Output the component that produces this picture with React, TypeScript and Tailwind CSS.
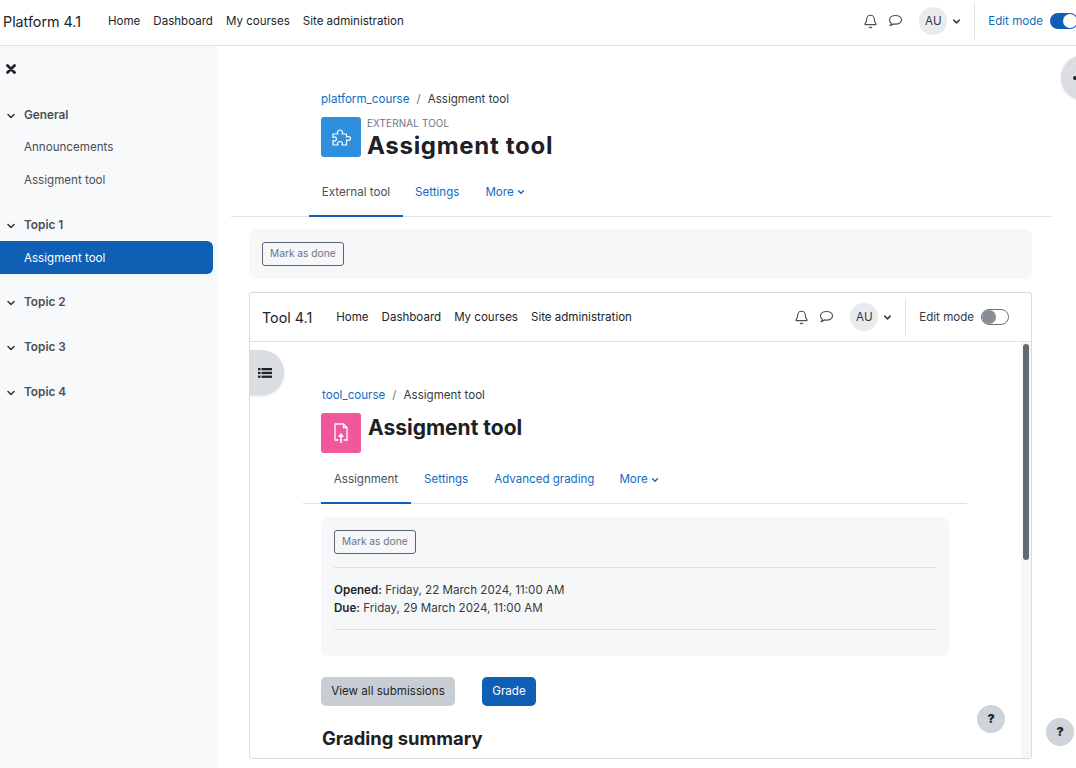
import { Bell, ChevronDown } from "lucide-react";

const font = "font-['Inter','Liberation_Sans',sans-serif]";

function Chevron({ className }: { className?: string }) {
  return <ChevronDown className={className} strokeWidth={3.2} />;
}

function ChatIcon() {
  return (
    <svg className="ml-[10px]" width="15" height="14" viewBox="0 0 15 14" fill="none" stroke="#495057" strokeWidth="1.2" strokeLinejoin="round">
      <path d="M7.500 1.500c3.400 0 6 1.800 6 4.300s-2.600 4.300-6 4.300c-.8 0-1.500-.1-2.200-.3-.7.8-1.800 1.600-3.200 1.800.7-.7 1.100-1.500 1.200-2.500C2.300 8.800 1.500 7.400 1.500 5.800c0-2.500 2.600-4.300 6-4.300z" />
    </svg>
  );
}

function TopBar({ brand, edit, barClass, navClass }: { brand: string; edit: boolean; barClass: string; navClass: string }) {
  return (
    <div className={`flex items-center ${barClass}`}>
      <span className="pt-[2px] text-[14.3px] text-[#212529] whitespace-nowrap">{brand}</span>
      <nav className={`flex gap-[13px] pt-[2px] text-[11.55px] text-[#212529] whitespace-nowrap ${navClass}`}>
        <span>Home</span>
        <span>Dashboard</span>
        <span>My courses</span>
        <span>Site administration</span>
      </nav>
      <div className="ml-auto flex items-center shrink-0">
        <Bell className="w-[15px] h-[15px] text-[#495057]" strokeWidth={1.8} />
        <ChatIcon />
        <div className="ml-[16px] w-[28px] h-[28px] pt-[2px] rounded-full bg-[#e9ecef] flex items-center justify-center text-[11.6px] text-[#343a40]">
          AU
        </div>
        <Chevron className="w-[11px] h-[11px] ml-[4px] text-[#343a40]" />
        <div className="w-px h-[36px] bg-[#dee2e6] ml-[12px]" />
        <span className={`ml-[13px] pt-[2px] text-[11.55px] whitespace-nowrap ${edit ? "text-[#0f6cbf]" : "text-[#343a40]"}`}>
          Edit mode
        </span>
        {edit ? (
          <div className="ml-[7px] w-[28px] h-[16px] rounded-full bg-[#0f5fb5] shrink-0 flex items-center justify-end pr-[1px]">
            <div className="w-[14px] h-[14px] rounded-full bg-white" />
          </div>
        ) : (
          <div className="ml-[7px] w-[28px] h-[16px] rounded-full border border-[#6a737b] bg-white shrink-0 flex items-center">
            <div className="w-[14px] h-[14px] rounded-full bg-[#868e96]" />
          </div>
        )}
      </div>
    </div>
  );
}

function SideSection({ title }: { title: string }) {
  return (
    <div className="flex items-center h-[20px] pl-[5px] text-[#343a40]">
      <Chevron className="w-[12px] h-[12px]" />
      <span className="ml-[7px] text-[11.8px] font-semibold text-[#495057]">{title}</span>
    </div>
  );
}

function SideItem({ label, active }: { label: string; active?: boolean }) {
  return (
    <div
      className={`h-[33px] mr-[5px] pl-[24px] pt-[2px] flex items-center text-[11.6px] rounded-r-[6px] ${
        active ? "bg-[#0f5fb5] text-white" : "text-[#495057]"
      }`}
    >
      {label}
    </div>
  );
}

function Tab({ label, active, className, boxClass }: { label: React.ReactNode; active?: boolean; className?: string; boxClass?: string }) {
  return (
    <div
      className={`flex items-center justify-center border-b-2 -mb-px ${boxClass ?? ""} ${
        active ? "border-[#0f5fb5] text-[#495057]" : "border-transparent text-[#0f6cbf]"
      } ${className ?? ""}`}
    >
      {label}
    </div>
  );
}

function More() {
  return (
    <span className="flex items-center">
      More
      <Chevron className="w-[10px] h-[10px] ml-[2px]" />
    </span>
  );
}

function HelpButton({ className }: { className: string }) {
  return (
    <div
      className={`absolute w-[28px] h-[28px] rounded-full bg-[#ced4da] flex items-center justify-center text-[12px] font-black text-[#212529] ${className}`}
    >
      ?
    </div>
  );
}

function InnerPage() {
  return (
    <div className="relative h-[467px] border border-[#d8dbde] rounded-[3px] bg-white overflow-hidden">
      <div className="h-[49px] border-b border-[#dee2e6]">
        <TopBar brand="Tool 4.1" edit={false} barClass="h-full pl-[12px] pr-[22px]" navClass="ml-[24px]" />
      </div>

      <div className="flex">
        <div className="flex-1 min-w-0 pl-[53px] pr-[54px]">
          <div className="ml-[19px] mt-[45px] text-[11.6px] leading-[16px] text-[#343a40]">
            <span className="text-[#0f6cbf]">tool_course</span>
            <span className="mx-[7px] text-[#6c757d]">/</span>
            <span>Assigment tool</span>
          </div>
          <div className="ml-[18px] mt-[10px] flex items-start">
            <div className="w-[40px] h-[40px] rounded-[3px] bg-[#f0589b] flex items-center justify-center">
              <svg width="16" height="22" viewBox="0 0 16 22" fill="none" stroke="white" strokeWidth="1.300">
                <path d="M5.500 18H2V2h8.500L14 5.500V18h-3.500" />
                <path d="M10.500 2v3.500H14" />
                <path d="M8 21v-8" strokeWidth="1.600" />
                <path d="M5 15 8 11l3 4z" fill="white" stroke="none" />
              </svg>
            </div>
            <h2 className="ml-[7px] mt-[1px] text-[21px] leading-[28px] font-bold text-[#1d2125]">Assigment tool</h2>
          </div>
          <div className="mt-[9px] h-[42px] border-b border-[#dee2e6] flex items-stretch text-[11.55px]">
            <Tab label="Assignment" active boxClass="pb-[4px]" className="ml-[18px] w-[90px]" />
            <Tab label="Settings" boxClass="pb-[4px]" className="ml-[13px]" />
            <Tab label="Advanced grading" boxClass="pb-[4px]" className="ml-[26px]" />
            <Tab label={<More />} boxClass="pb-[4px]" className="ml-[25px]" />
          </div>
          <div className="mx-[18px] mt-[13px] h-[139px] rounded-lg bg-[#f6f7f9] px-[13px] pt-[13px]">
            <button className="block h-[24px] px-[7px] border border-[#5d6670] rounded-[3px] text-[10.2px] text-[#6c757d]">
              Mark as done
            </button>
            <div className="mt-[13px] border-y border-[#dee2e6] pt-[13px] pb-[12px] text-[11.6px] leading-[18px] text-[#343a40]">
              <p>
                <strong className="font-semibold text-[#212529]">Opened:</strong> Friday, 22 March 2024, 11:00 AM
              </p>
              <p>
                <strong className="font-semibold text-[#212529]">Due:</strong> Friday, 29 March 2024, 11:00 AM
              </p>
            </div>
          </div>
          <div className="ml-[18px] mt-[21px] flex gap-[27px] text-[11.6px]">
            <button className="h-[29px] w-[134px] rounded-[5px] bg-[#c8ced4] text-[#212529]">View all submissions</button>
            <button className="h-[29px] w-[54px] rounded-[5px] bg-[#0f5fb5] text-white">Grade</button>
          </div>
          <h3 className="ml-[19px] mt-[19px] text-[18.400px] leading-[26px] font-bold text-[#1d2125]">Grading summary</h3>
        </div>
        <div className="w-[10px] h-[417px] bg-[#f6f7f9] pt-[2px] flex justify-center shrink-0">
          <div className="w-[6px] h-[216px] rounded-full bg-[#616a72]" />
        </div>
      </div>

      <div className="absolute left-0 top-[57px] w-[34px] h-[45px] rounded-r-full bg-[#dadde1] shadow-sm flex items-center justify-center pr-[4px]">
        <svg width="14" height="12" viewBox="0 0 14 12" fill="#212529">
          <rect x="0" y="1" width="2.500" height="2.300" />
          <rect x="3.500" y="1" width="10.500" height="2.300" />
          <rect x="0" y="4.800" width="2.500" height="2.300" />
          <rect x="3.500" y="4.800" width="10.500" height="2.300" />
          <rect x="0" y="8.600" width="2.500" height="2.300" />
          <rect x="3.500" y="8.600" width="10.500" height="2.300" />
        </svg>
      </div>
      <HelpButton className="left-[727px] top-[412px]" />
    </div>
  );
}

export default function App() {
  return (
    <div className={`relative w-[1076px] h-[768px] overflow-hidden bg-white ${font}`}>
      <header className="h-[46px] border-b border-[#dee2e6]">
        <TopBar brand="Platform 4.1" edit barClass="h-[42px] w-[1078px] pl-[3px]" navClass="ml-[27px]" />
      </header>

      <div className="flex h-[722px]">
        <aside className="w-[218px] shrink-0 bg-[#f8f9fa]">
          <div className="h-[60px] pl-[6px] pt-[18px]">
            <svg className="block" width="10" height="10" viewBox="0 0 10 10" stroke="#212529" strokeWidth="2.800" strokeLinecap="round">
              <path d="M1.500 1.500l7 7M8.500 1.500l-7 7" />
            </svg>
          </div>
          <div>
            <SideSection title="General" />
            <div className="mt-[4px]">
              <SideItem label="Announcements" />
              <SideItem label="Assigment tool" />
            </div>
          </div>
          <div className="mt-[20px]">
            <SideSection title="Topic 1" />
            <div className="mt-[5px]">
              <SideItem label="Assigment tool" active />
            </div>
          </div>
          <div className="mt-[19px] flex flex-col gap-[25px]">
            <SideSection title="Topic 2" />
            <SideSection title="Topic 3" />
            <SideSection title="Topic 4" />
          </div>
        </aside>

        <main className="flex-1 min-w-0 pl-[13px] pr-[25px]">
          <div className="ml-[90px] mt-[45px] text-[11.6px] leading-[16px] text-[#343a40]">
            <span className="text-[#0f6cbf]">platform_course</span>
            <span className="mx-[7px] text-[#6c757d]">/</span>
            <span>Assigment tool</span>
          </div>
          <div className="ml-[90px] mt-[10px] flex items-start">
            <div className="w-[40px] h-[40px] rounded-[3px] bg-[#2f8fdc] flex items-center justify-center">
              <svg width="20" height="17" viewBox="0 0 20 17" fill="none" stroke="white" strokeWidth="1.200" strokeLinejoin="round">
                <path d="M2 5h5C6 3.500 6.500 1 9 1s3 2.500 2 4h4.500v3c1.500-1 4-.5 4 1.500s-2.500 2.500-4 1.500v5H11c1-2 0-3.500-2-3.500S6 14 7 16H2v-4.500c1.500 1 3.500.5 3.500-1.500S3.500 7.500 2 8.500z" />
              </svg>
            </div>
            <div className="ml-[6px] pt-[1px]">
              <div className="text-[9.800px] leading-[12px] text-[#6c757d] tracking-[0.2px]">EXTERNAL TOOL</div>
              <h1 className="mt-[1px] text-[24px] leading-[30px] font-bold text-[#1d2125] tracking-[0.7px]">Assigment tool</h1>
            </div>
          </div>
          <div className="mt-[9px] h-[47px] border-b border-[#dee2e6] flex items-stretch text-[11.6px]">
            <Tab label="External tool" active className="ml-[78px] w-[94px]" />
            <Tab label="Settings" className="ml-[12px]" />
            <Tab label={<More />} className="ml-[26px]" />
          </div>
          <div className="ml-[18px] mr-[19px] mt-[12px] h-[50px] rounded-lg bg-[#f6f7f9] px-[13px] flex items-center">
            <button className="block h-[24px] px-[7px] border border-[#5d6670] rounded-[3px] text-[10.2px] text-[#6c757d]">
              Mark as done
            </button>
          </div>
          <div className="ml-[18px] mr-[19px] mt-[13px]">
            <InnerPage />
          </div>
        </main>
      </div>

      <div className="absolute left-[1061px] top-[55px] w-[34px] h-[45px] rounded-l-full bg-[#dadde1] shadow-sm flex items-center pl-[12px]">
        <span className="w-[4px] h-[4px] rounded-full bg-[#212529]" />
      </div>
      <HelpButton className="left-[1046px] top-[718px]" />
    </div>
  );
}
